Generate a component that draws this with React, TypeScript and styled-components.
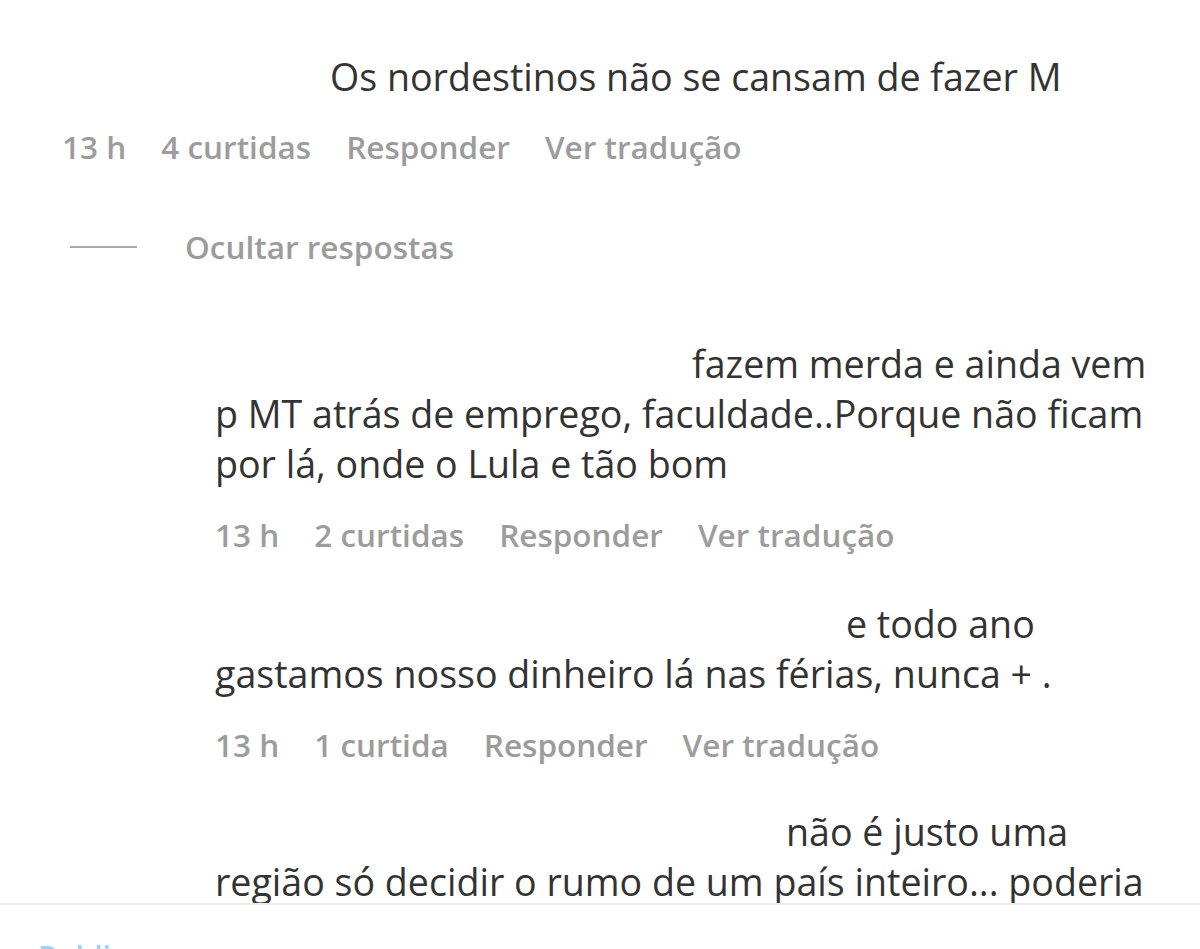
import React from "react";
import styled, { createGlobalStyle } from "styled-components";

const GlobalStyle = createGlobalStyle`
  html, body { margin: 0; padding: 0; background: #ffffff; }
  body { font-family: "Open Sans", "Noto Sans", sans-serif; }
`;

const Page = styled.div`
  width: 1200px;
  height: 949px;
  overflow: hidden;
  display: flex;
  flex-direction: column;
  background: #ffffff;
`;

const CommentsArea = styled.div`
  height: 903px;
  flex-shrink: 0;
  overflow: hidden;
  padding: 52px 0 0 62px;
  box-sizing: border-box;
  display: flex;
  flex-direction: column;
`;

const Comment = styled.div<{ $gapTop?: number }>`
  display: flex;
  flex-direction: column;
  margin-top: ${(p) => p.$gapTop ?? 0}px;
`;

const Body = styled.div`
  font-size: 37.6px;
  line-height: 50px;
  color: #333333;
  white-space: nowrap;
`;

const Erased = styled.span<{ $w: number }>`
  display: inline-block;
  width: ${(p) => p.$w}px;
`;

const Meta = styled.div<{ $gapTop: number }>`
  display: flex;
  gap: 35px;
  margin-top: ${(p) => p.$gapTop}px;
  font-size: 31.5px;
  line-height: 40px;
  font-weight: 600;
  color: #9c9c9c;
`;

const Replies = styled.div`
  display: flex;
  flex-direction: column;
  padding-left: 153px;
`;

const ToggleRow = styled.div`
  display: flex;
  align-items: center;
  gap: 48px;
  margin: 60px 0 0 8px;
  font-size: 31.5px;
  line-height: 40px;
  font-weight: 600;
  color: #9c9c9c;
`;

const Dash = styled.span`
  display: inline-block;
  width: 67px;
  height: 2px;
  background: #a8a8a8;
`;

const BottomBar = styled.div`
  border-top: 2px solid #ececec;
  padding: 32px 0 0 38px;
  font-size: 30px;
  line-height: 40px;
  font-weight: 600;
  color: #9fd0f5;
`;

type Reply = { erased: number; lines: string[]; meta?: string[]; gapTop: number };

const replies: Reply[] = [
  {
    erased: 477,
    lines: [
      "fazem merda e ainda vem",
      "p MT atrás de emprego, faculdade..Porque não ficam",
      "por lá, onde o Lula e tão bom",
    ],
    meta: ["13 h", "2 curtidas", "Responder", "Ver tradução"],
    gapTop: 72,
  },
  {
    erased: 631,
    lines: ["e todo ano", "gastamos nosso dinheiro lá nas férias, nunca + ."],
    meta: ["13 h", "1 curtida", "Responder", "Ver tradução"],
    gapTop: 44,
  },
  {
    erased: 571,
    lines: ["não é justo uma", "região só decidir o rumo de um país inteiro... poderia"],
    gapTop: 42,
  },
];

export default function App() {
  return (
    <Page>
      <GlobalStyle />
      <CommentsArea>
        <Comment>
          <Body>
            <Erased $w={268} />
            Os nordestinos não se cansam de fazer M
          </Body>
          <Meta $gapTop={25}>
            <span>13 h</span>
            <span>4 curtidas</span>
            <span>Responder</span>
            <span>Ver tradução</span>
          </Meta>
        </Comment>
        <ToggleRow>
          <Dash />
          <span>Ocultar respostas</span>
        </ToggleRow>
        <Replies>
          {replies.map((r, i) => (
            <Comment key={i} $gapTop={r.gapTop}>
              <Body>
                {r.lines.map((l, j) => (
                  <div key={j}>
                    {j === 0 && <Erased $w={r.erased} />}
                    {l}
                  </div>
                ))}
              </Body>
              {r.meta && (
                <Meta $gapTop={26}>
                  {r.meta.map((m) => (
                    <span key={m}>{m}</span>
                  ))}
                </Meta>
              )}
            </Comment>
          ))}
        </Replies>
      </CommentsArea>
      <BottomBar>Publicar</BottomBar>
    </Page>
  );
}
